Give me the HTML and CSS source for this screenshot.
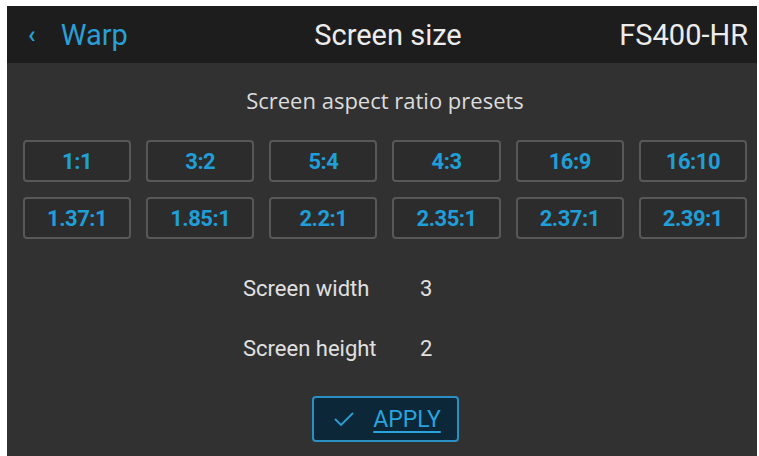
FILE: index.html
```html
<!DOCTYPE html>
<html lang="en">
<head>
  <meta charset="UTF-8">
  <title>Screen size</title>
  <link rel="stylesheet" href="styles.css">
</head>
<body>
  <div class="screen">
    <div class="topbar">
      <div class="back"><span class="chev">&#8249;</span> Warp</div>
      <div class="title">Screen size</div>
      <div class="model">FS400-HR</div>
    </div>

    <div class="content">
      <div class="section-title">Screen aspect ratio presets</div>
      <div class="presets">
        <button class="preset">1:1</button>
        <button class="preset">3:2</button>
        <button class="preset">5:4</button>
        <button class="preset">4:3</button>
        <button class="preset">16:9</button>
        <button class="preset">16:10</button>
        <button class="preset">1.37:1</button>
        <button class="preset">1.85:1</button>
        <button class="preset">2.2:1</button>
        <button class="preset">2.35:1</button>
        <button class="preset">2.37:1</button>
        <button class="preset">2.39:1</button>
      </div>

      <div class="fields">
        <div class="field-label">Screen width</div>
        <div class="field-value">3</div>
        <div class="field-label">Screen height</div>
        <div class="field-value">2</div>
      </div>

      <div class="actions">
        <button class="apply">
          <svg width="22" height="16" viewBox="0 0 22 16"><path d="M2 8 L8 14 L20 2" fill="none" stroke="#2a9fd6" stroke-width="1.8"/></svg>
          <span>APPLY</span>
        </button>
      </div>
    </div>
  </div>
</body>
</html>
```

FILE: styles.css
```css
body {
  margin: 0;
  background: #fff;
  font-family: Roboto, "Liberation Sans", sans-serif;
}
.screen {
  margin: 6px 2px 0 7px;
  height: 450px;
  background: #313131;
  color: #e6e6e6;
  overflow: hidden;
}
.topbar {
  height: 57px;
  background: #1d1d1d;
  display: grid;
  grid-template-columns: 1fr auto 1fr;
  align-items: center;
  padding: 0 9px 0 21px;
  font-size: 29px;
}
.back {
  color: #2a9fd6;
}
.chev {
  display: inline-block;
  font-size: 24px;
  margin-right: 18px;
  font-weight: bold;
  vertical-align: 2px;
}
.title {
  color: #ececec;
}
.model {
  text-align: right;
  color: #ececec;
}
.content {
  padding: 22px 10px 0 16px;
}
.section-title {
  text-align: center;
  font-family: "Open Sans", sans-serif;
  font-size: 22px;
  line-height: 30px;
  color: #dcdcdc;
}
.presets {
  margin-top: 25px;
  display: grid;
  grid-template-columns: repeat(6, 1fr);
  gap: 15px 15px;
}
.preset {
  height: 42px;
  background: #2c2c2c;
  border: 2px solid #585858;
  border-radius: 4px;
  color: #1f9ed8;
  font-family: Roboto, sans-serif;
  font-weight: bold;
  font-size: 22px;
  letter-spacing: -0.5px;
  padding: 0;
}
.fields {
  margin: 37px 0 0 220px;
  display: grid;
  grid-template-columns: 177px auto;
  row-gap: 34px;
  font-size: 22px;
  line-height: 26px;
  color: #e0e0e0;
}
.actions {
  margin-top: 34px;
  display: flex;
  justify-content: center;
}
.apply {
  width: 147px;
  height: 46px;
  background: #0b2738;
  border: 2px solid #2a8fc2;
  border-radius: 4px;
  display: flex;
  align-items: center;
  justify-content: center;
  gap: 18px;
  color: #2aa3dd;
  font-family: Roboto, sans-serif;
  font-size: 23px;
  padding: 0 0 0 4px;
}
.apply span {
  text-decoration: underline;
  text-underline-offset: 4px;
  text-decoration-thickness: 2px;
}
```
